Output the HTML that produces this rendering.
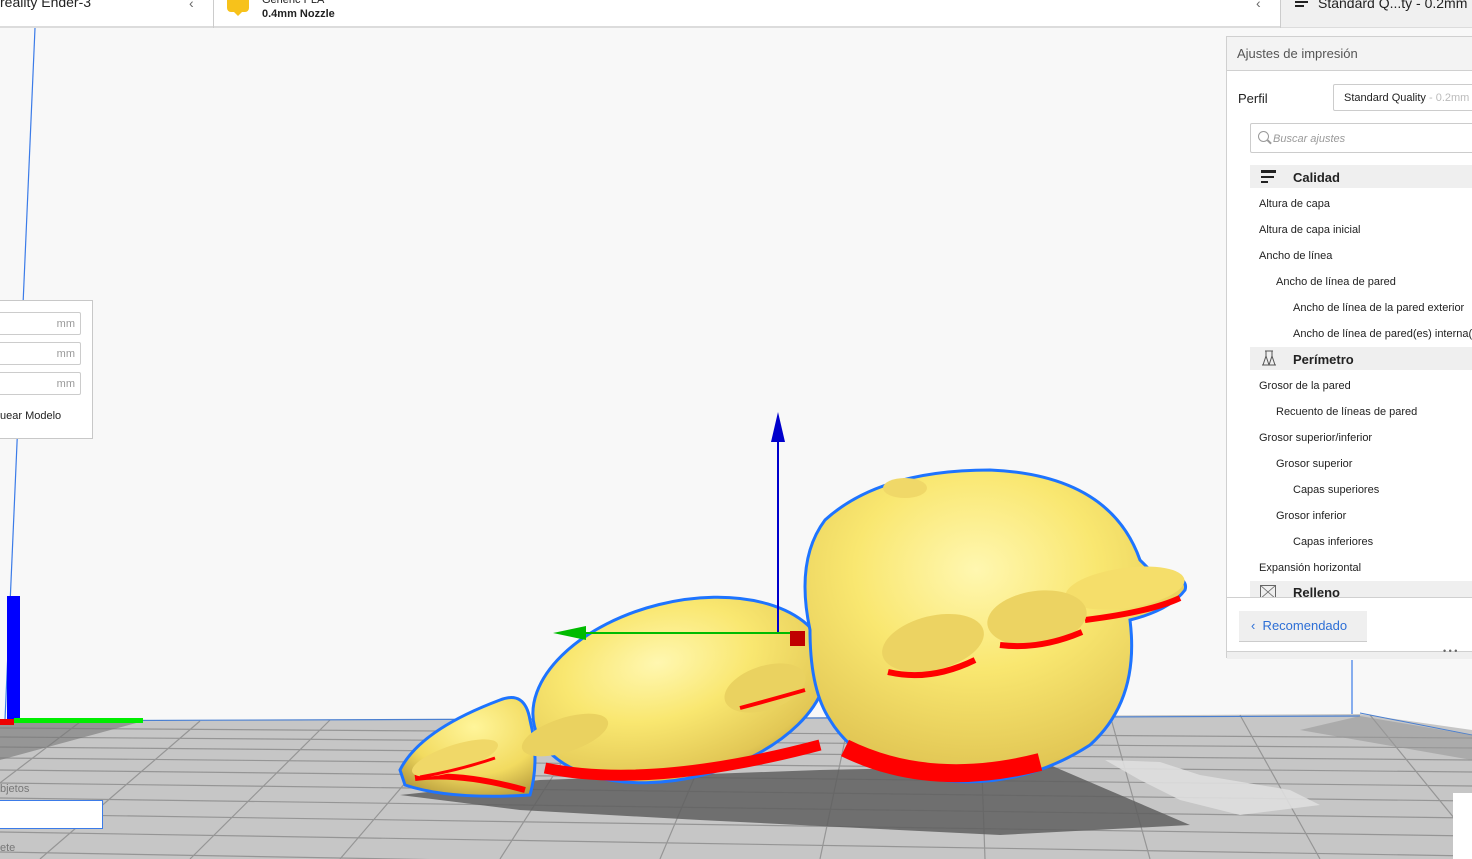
<!DOCTYPE html>
<html><head><meta charset="utf-8"><style>
*{margin:0;padding:0;box-sizing:border-box}
body{width:1472px;height:859px;overflow:hidden;background:#f8f8f8;font-family:"Liberation Sans",sans-serif;position:relative;color:#222}
.abs{position:absolute}
.rp div.i{position:absolute;font-size:11px;color:#222}
</style></head><body>
<svg class="abs" style="left:0;top:0" width="1472" height="859" viewBox="0 0 1472 859">
<defs>
<radialGradient id="y" cx="0.45" cy="0.32" r="0.8"><stop offset="0" stop-color="#fff7b0"/><stop offset="0.4" stop-color="#f9e770"/><stop offset="0.8" stop-color="#e2c755"/><stop offset="1" stop-color="#b89c3c"/></radialGradient>
<radialGradient id="y2" cx="0.55" cy="0.3" r="0.8"><stop offset="0" stop-color="#fff59a"/><stop offset="0.6" stop-color="#f2db60"/><stop offset="1" stop-color="#b09438"/></radialGradient>
</defs>
<polygon points="0,722 1360,714 1472,730 1472,859 0,859" fill="#c6c6c6"/>
<g stroke="#8a8a8a" stroke-width="1.2" opacity="0.8">
<line x1="0" y1="728" x2="1472" y2="738"/><line x1="0" y1="737" x2="1472" y2="748"/><line x1="0" y1="747" x2="1472" y2="760"/><line x1="0" y1="758" x2="1472" y2="772"/><line x1="0" y1="770" x2="1472" y2="786"/><line x1="0" y1="783" x2="1472" y2="801"/><line x1="0" y1="798" x2="1472" y2="818"/><line x1="0" y1="814" x2="1472" y2="836"/><line x1="0" y1="832" x2="1472" y2="856"/><line x1="0" y1="852" x2="1472" y2="878"/>
<line x1="80" y1="722" x2="-100" y2="859"/><line x1="200" y1="721" x2="40" y2="859"/><line x1="330" y1="720" x2="190" y2="859"/><line x1="460" y1="719" x2="340" y2="859"/><line x1="590" y1="718" x2="500" y2="859"/><line x1="720" y1="717" x2="660" y2="859"/><line x1="850" y1="716" x2="820" y2="859"/><line x1="980" y1="716" x2="985" y2="859"/><line x1="1110" y1="715" x2="1150" y2="859"/><line x1="1240" y1="715" x2="1320" y2="859"/><line x1="1370" y1="715" x2="1472" y2="840"/>
</g>
<line x1="0" y1="721" x2="1360" y2="716" stroke="#4a7fd0" stroke-width="1.2"/>
<line x1="1360" y1="713" x2="1472" y2="735" stroke="#4a7fd0" stroke-width="1"/>
<polygon points="1360,716 1472,735 1472,760 1300,730" fill="#9a9a9a" opacity="0.6"/>
<polygon points="0,722 140,722 0,760" fill="#777" opacity="0.6"/>
<polygon points="400,795 540,780 820,770 1050,765 1190,825 1000,835 700,820 520,810" fill="#5f5f5f" opacity="0.85"/>
<polygon points="1105,760 1160,762 1200,775 1290,790 1320,805 1240,815 1180,800 1140,780" fill="#dedede" opacity="0.9"/>
<line x1="35" y1="28" x2="5" y2="720" stroke="#3b7be8" stroke-width="1.2"/>
<line x1="1352" y1="660" x2="1352" y2="714" stroke="#3b7be8" stroke-width="1.2"/>
<rect x="7" y="596" width="13" height="124" fill="#0000ff"/>
<rect x="14" y="718" width="129" height="5" fill="#00ee00"/>
<rect x="0" y="719" width="14" height="6" fill="#ee0000"/>
<g>
<path d="M400,770 Q420,730 500,700 Q525,690 530,720 Q540,760 530,795 Q450,800 405,785 Z" fill="url(#y2)" stroke="#1e74ff" stroke-width="3"/>
<path d="M415,778 Q460,772 525,790" stroke="#f00" stroke-width="6" fill="none"/>
<ellipse cx="455" cy="758" rx="45" ry="13" transform="rotate(-18 455 758)" fill="#f0d868"/>
<path d="M420,777 Q460,770 495,758" stroke="#f00" stroke-width="3" fill="none"/>
<ellipse cx="680" cy="690" rx="150" ry="88" transform="rotate(-14 680 690)" fill="url(#y)" stroke="#1e74ff" stroke-width="3"/>
<path d="M545,768 Q650,790 820,745" stroke="#f00" stroke-width="11" fill="none"/>
<ellipse cx="565" cy="735" rx="45" ry="17" transform="rotate(-18 565 735)" fill="#ead260"/>
<ellipse cx="765" cy="688" rx="42" ry="22" transform="rotate(-18 765 688)" fill="#ead260"/>
<path d="M740,708 Q770,700 805,690" stroke="#f00" stroke-width="4" fill="none"/>
<path d="M825,520 Q880,470 990,470 Q1110,475 1140,560 L1150,570 Q1190,575 1185,590 Q1170,610 1130,620 Q1140,700 1090,745 Q1020,790 940,780 Q860,770 830,720 Q810,690 810,630 Q795,560 825,520 Z" fill="url(#y)" stroke="#1e74ff" stroke-width="3"/>
<path d="M845,748 Q930,790 1040,762" stroke="#f00" stroke-width="18" fill="none"/>
<ellipse cx="1125" cy="588" rx="60" ry="20" transform="rotate(-8 1125 588)" fill="#f5de6a"/>
<path d="M1085,620 Q1150,612 1180,598" stroke="#f00" stroke-width="6" fill="none"/>
<ellipse cx="1037" cy="618" rx="50" ry="27" transform="rotate(-8 1037 618)" fill="#ecd362"/>
<path d="M1000,645 Q1040,650 1082,632" stroke="#f00" stroke-width="6" fill="none"/>
<ellipse cx="933" cy="643" rx="52" ry="27" transform="rotate(-14 933 643)" fill="#ecd362"/>
<path d="M888,672 Q930,682 975,660" stroke="#f00" stroke-width="6" fill="none"/>
<ellipse cx="905" cy="488" rx="22" ry="10" fill="#f0d868"/>
</g>
<line x1="778" y1="440" x2="778" y2="634" stroke="#0000cc" stroke-width="2"/>
<polygon points="778,412 771,442 785,442" fill="#0000cc"/>
<line x1="580" y1="633" x2="792" y2="633" stroke="#00bb00" stroke-width="2"/>
<polygon points="553,633 586,626 586,640" fill="#00bb00"/>
<rect x="790" y="631" width="15" height="15" fill="#c00000"/>
</svg>

<div class="abs" style="left:0;top:0;width:1472px;height:28px;background:#fff;border-bottom:2px solid #dcdcdc"></div>
<div class="abs" style="left:1280px;top:0;width:192px;height:27px;background:#f0f0f0"></div>
<div class="abs" style="left:213px;top:0;width:1px;height:28px;background:#ccc"></div>
<div class="abs" style="left:1280px;top:0;width:1px;height:28px;background:#ccc"></div>
<div class="abs" style="left:0;top:-6px;font-size:14px;color:#222">reality Ender-3</div>
<div class="abs" style="left:189px;top:-5px;font-size:14px;color:#666">‹</div>
<div class="abs" style="left:1256px;top:-5px;font-size:14px;color:#666">‹</div>
<div class="abs" style="left:227px;top:0;width:22px;height:12px;background:#f7c21b;border-radius:0 0 4px 4px"></div>
<div class="abs" style="left:233px;top:11px;width:0;height:0;border:5px solid transparent;border-top:5px solid #f7c21b"></div>
<div class="abs" style="left:262px;top:-6px;font-size:11px;color:#222">Generic PLA</div>
<div class="abs" style="left:262px;top:8px;font-size:11px;font-weight:bold;color:#222">0.4mm Nozzle</div>
<div class="abs" style="left:1295px;top:1px;width:13px;height:2px;background:#222"></div>
<div class="abs" style="left:1295px;top:5px;width:9px;height:2px;background:#222"></div>
<div class="abs" style="left:1318px;top:-5px;font-size:14px;color:#222">Standard Q...ty - 0.2mm</div>

<div class="abs" style="left:-2px;top:300px;width:95px;height:139px;background:#fff;border:1px solid #c8c8c8"></div>
<div class="abs" style="left:-2px;top:312px;width:83px;height:23px;border:1px solid #ccc;border-radius:2px;font-size:11px;color:#999;text-align:right;padding:5px 5px 0 0">mm</div>
<div class="abs" style="left:-2px;top:342px;width:83px;height:23px;border:1px solid #ccc;border-radius:2px;font-size:11px;color:#999;text-align:right;padding:5px 5px 0 0">mm</div>
<div class="abs" style="left:-2px;top:372px;width:83px;height:23px;border:1px solid #ccc;border-radius:2px;font-size:11px;color:#999;text-align:right;padding:5px 5px 0 0">mm</div>
<div class="abs" style="left:0;top:410px;font-size:11px;color:#222">uear Modelo</div>
<div class="abs" style="left:0;top:783px;font-size:11px;color:#777">bjetos</div>
<div class="abs" style="left:-2px;top:800px;width:105px;height:29px;background:#fff;border:1px solid #3b7be8"></div>
<div class="abs" style="left:0;top:842px;font-size:11px;color:#777">ete</div>
<div class="abs" style="left:1453px;top:793px;width:19px;height:66px;background:#fff"></div>

<div class="abs rp" style="left:1226px;top:36px;width:250px;height:622px;background:#fff;border:1px solid #d0d0d0">
<div style="position:absolute;left:0;top:0;width:100%;height:34px;background:#f3f3f3;border-bottom:1px solid #d0d0d0"></div>
<div class="i" style="left:10px;top:9px;font-size:13px;color:#555">Ajustes de impresión</div>
<div class="i" style="left:11px;top:54px;font-size:13px">Perfil</div>
<div style="position:absolute;left:106px;top:47px;width:150px;height:27px;border:1px solid #ccc;border-radius:2px"></div>
<div class="i" style="left:117px;top:55px">Standard Quality <span style="color:#bbb">- 0.2mm</span></div>
<div style="position:absolute;left:23px;top:86px;width:230px;height:30px;border:1px solid #ccc;border-radius:2px"></div>
<div style="position:absolute;left:31px;top:94px;width:11px;height:11px;border:1.5px solid #999;border-radius:50%"></div>
<div style="position:absolute;left:40px;top:104px;width:5px;height:1.5px;background:#999;transform:rotate(45deg)"></div>
<div class="i" style="left:46px;top:96px;font-style:italic;color:#999">Buscar ajustes</div>
<div style="position:absolute;left:23px;top:128px;width:230px;height:23px;background:#efefef"></div>
<div style="position:absolute;left:34px;top:133px;width:15px;height:3px;background:#222"></div>
<div style="position:absolute;left:34px;top:139px;width:13px;height:2px;background:#222"></div>
<div style="position:absolute;left:34px;top:144px;width:7px;height:2px;background:#222"></div>
<div class="i" style="left:66px;top:133px;font-size:13px;font-weight:bold">Calidad</div>
<div class="i" style="left:32px;top:161px">Altura de capa</div>
<div class="i" style="left:32px;top:187px">Altura de capa inicial</div>
<div class="i" style="left:32px;top:213px">Ancho de línea</div>
<div class="i" style="left:49px;top:239px">Ancho de línea de pared</div>
<div class="i" style="left:66px;top:265px;white-space:nowrap">Ancho de línea de la pared exterior</div>
<div class="i" style="left:66px;top:291px;white-space:nowrap">Ancho de línea de pared(es) interna(s)</div>
<div style="position:absolute;left:23px;top:310px;width:230px;height:23px;background:#efefef"></div>
<svg style="position:absolute;left:34px;top:313px" width="16" height="17"><path d="M4,1 H12 M5,1 L5,6 L2,15 M11,1 L11,6 L14,15 M1,15 H15 M5,6 L8,15 M11,6 L8,15" stroke="#555" stroke-width="1" fill="none"/></svg>
<div class="i" style="left:66px;top:315px;font-size:13px;font-weight:bold">Perímetro</div>
<div class="i" style="left:32px;top:343px">Grosor de la pared</div>
<div class="i" style="left:49px;top:369px">Recuento de líneas de pared</div>
<div class="i" style="left:32px;top:395px">Grosor superior/inferior</div>
<div class="i" style="left:49px;top:421px">Grosor superior</div>
<div class="i" style="left:66px;top:447px">Capas superiores</div>
<div class="i" style="left:49px;top:473px">Grosor inferior</div>
<div class="i" style="left:66px;top:499px">Capas inferiores</div>
<div class="i" style="left:32px;top:525px">Expansión horizontal</div>
<div style="position:absolute;left:23px;top:544px;width:230px;height:16px;background:#efefef;overflow:hidden">
<svg style="position:absolute;left:10px;top:4px" width="16" height="14"><rect x="0.5" y="0.5" width="15" height="13" stroke="#666" fill="none"/><path d="M0,0 L16,14 M16,0 L0,14" stroke="#666" stroke-width="0.8"/></svg>
<div style="position:absolute;left:43px;top:4px;font-size:13px;font-weight:bold">Relleno</div></div>
<div style="position:absolute;left:0;top:560px;width:100%;height:1px;background:#d0d0d0"></div>
<div style="position:absolute;left:12px;top:574px;width:128px;height:31px;background:#efefef;border-bottom:1px solid #ccc"></div>
<div class="i" style="left:24px;top:581px;font-size:13px;color:#2d6fd6">‹&nbsp; Recomendado</div>
<div style="position:absolute;left:0;top:614px;width:100%;height:8px;background:#efefef;border-top:1px solid #d0d0d0"></div>
<div class="i" style="left:216px;top:609px;font-size:9px;color:#666">• • •</div>
</div>
</body></html>
